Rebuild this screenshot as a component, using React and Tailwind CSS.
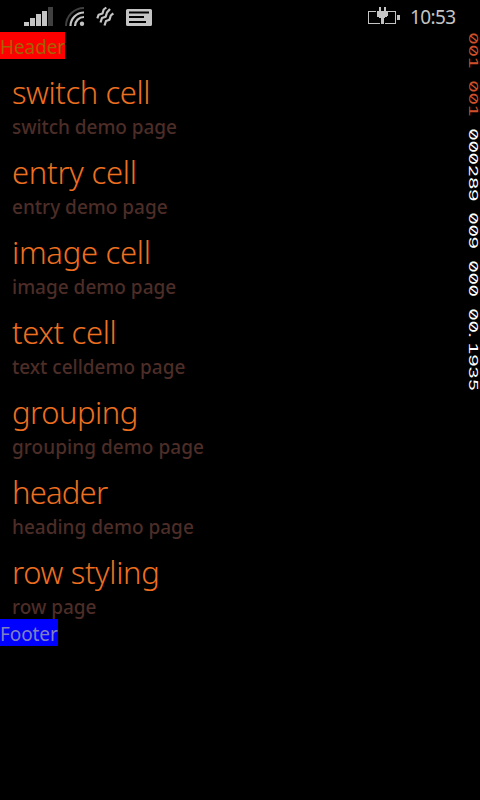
import React from "react";

const rows = [
  { title: "switch cell", detail: "switch demo page", t: "tracking-[-0.43px]", d: "tracking-[-0.05px]" },
  { title: "entry cell", detail: "entry demo page", t: "tracking-[-0.25px]", d: "tracking-[0px]" },
  { title: "image cell", detail: "image demo page", t: "tracking-[-0.3px]", d: "tracking-[0px]" },
  { title: "text cell", detail: "text celldemo page", t: "tracking-[-0.35px]", d: "tracking-[0px]" },
  { title: "grouping", detail: "grouping demo page", t: "tracking-[-0.5px]", d: "tracking-[0.05px]" },
  { title: "header", detail: "heading demo page", t: "tracking-[-0.8px]", d: "tracking-[0px]" },
  { title: "row styling", detail: "row page", t: "tracking-[-0.35px]", d: "tracking-[0px]" },
];

function SignalIcons() {
  return (
    <svg width="160" height="32" viewBox="0 0 160 32" fill="none">
      <g fill="#c4c4c4">
        <path d="M24 22h5v4h-5zM30 18h5v8h-5zM36 14h5v12h-5zM42 11h5v15h-5z" />
        <path d="M48 7h5v19h-5z" fill="#404040" />
      </g>
      <path d="M66 26A18 18 0 0 1 84 8" stroke="#404040" strokeWidth="2" />
      <g stroke="#c4c4c4" strokeWidth="2.200">
        <path d="M70.500 26A13.500 13.500 0 0 1 84 12.500M75 26A9 9 0 0 1 84 17" />
      </g>
      <circle cx="82" cy="23.800" r="2.200" fill="#c4c4c4" />
      <g stroke="#c4c4c4" strokeWidth="2.200" strokeLinejoin="round">
        <path d="M97.300 18.300L98.700 14.700L102.500 13.500L103.700 9.500L106.300 7.500" />
        <path d="M100.500 22.500L102 18L105.700 16.700L107 12.500L110 9" />
        <path d="M104.500 25.500L106 21L109.500 19.700L110.800 15.500L113.300 13.300" />
      </g>
      <path fillRule="evenodd" fill="#c4c4c4" d="M127.500 9h23q1.500 0 1.500 1.500v14q0 1.500-1.500 1.500h-23q-1.500 0-1.500-1.500v-14q0-1.500 1.500-1.500zM129 11.500v2h20v-2zM129 16v2h15v-2zM129 21v2h17v-2z" />
    </svg>
  );
}

function BatteryIcon() {
  return (
    <svg width="34" height="20" viewBox="0 0 34 20" shapeRendering="crispEdges">
      <path d="M9 5.500H1.500v12h11M20 5.500h8v12H18" fill="none" stroke="#c4c4c4" />
      <path d="M12 1h2v4h3V1h2v4h2v5h-1v1h-2v1h-1v6h-3v-6h-2v-1h-2V10H10V5h2zM30 9h3v5h-3z" fill="#c4c4c4" />
    </svg>
  );
}

export default function App() {
  return (
    <div className="relative flex h-[800px] w-[480px] flex-col overflow-hidden bg-black font-['Noto_Sans','Open_Sans',sans-serif]">
      <header className="flex h-8 shrink-0 items-center">
        <SignalIcons />
        <div className="ml-auto flex items-center pr-[25px]">
          <BatteryIcon />
          <span className="ml-[9px] mt-[2px] w-[45px] whitespace-nowrap text-[19px] leading-[26px] tracking-[-0.6px] text-[#c4c4c4]">10:53</span>
        </div>
      </header>
      <div className="h-[27px] w-[65px] shrink-0 whitespace-nowrap bg-[#ff0000] text-[19px] leading-[31px] tracking-[-0.1px] text-[#a56200]">Header</div>
      <main className="h-[560px] shrink-0 pl-3 pt-[14px]">
        {rows.map((row) => (
          <section key={row.title} className="h-20 whitespace-nowrap">
            <h2 className={`h-[42px] text-[31px] font-light leading-[39px] text-[#ee6f20] ${row.t}`}>
              <span>{row.title}</span>
            </h2>
            <p className={`text-[19px] font-medium leading-[25px] text-[#4c2d27] ${row.d}`}>
              <span>{row.detail}</span>
            </p>
          </section>
        ))}
      </main>
      <footer className="h-[27px] w-[58px] shrink-0 whitespace-nowrap bg-[#0000ff] text-[19px] leading-[31px] tracking-[-0.1px] text-[#8080c0]">Footer</footer>
      <div className="absolute left-[479px] top-[32px] flex origin-top-left rotate-90 scale-y-[0.6] gap-3 whitespace-pre font-['Inter',sans-serif] text-[20px] leading-[18px] tracking-[-0.8px] text-white [font-feature-settings:'zero','tnum']">
        <span className="w-9 text-[#d0502a]">001</span>
        <span className="w-9 text-[#d0502a]">001</span>
        <span className="w-[72px]">000289</span>
        <span className="w-9">009</span>
        <span className="w-9">000</span>
        <span className="w-[84px]">00.<span className="pl-[5px]">1935</span></span>
      </div>
    </div>
  );
}
